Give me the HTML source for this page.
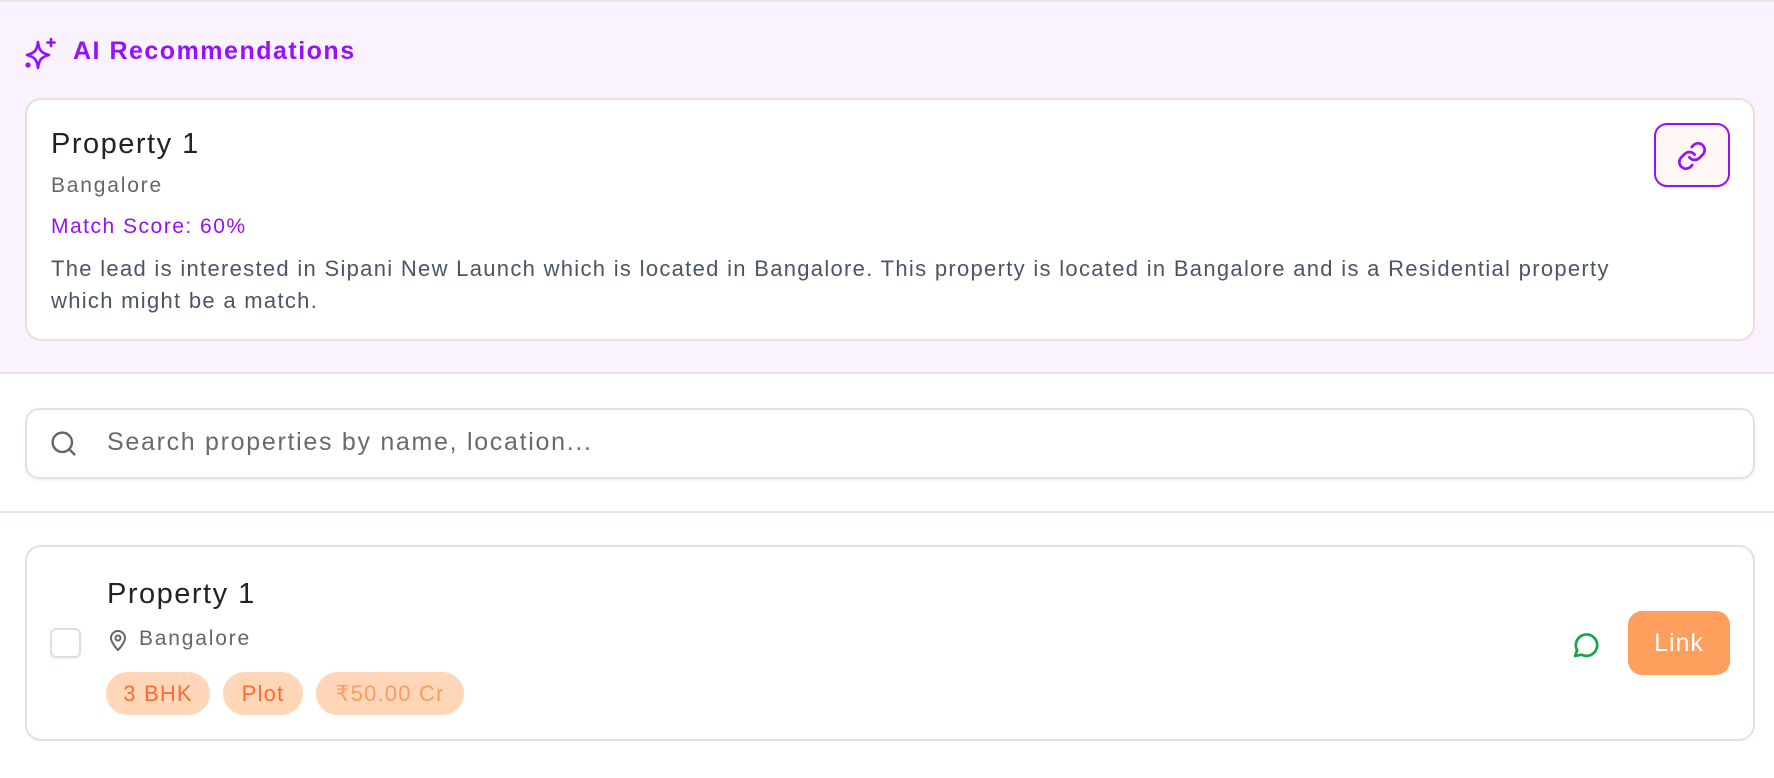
<!DOCTYPE html>
<html><head><meta charset="utf-8"><style>
*{box-sizing:border-box;margin:0;padding:0}
body{width:1774px;height:778px;background:#fff;font-family:"Liberation Sans",sans-serif;position:relative;overflow:hidden;letter-spacing:1.6px}
.band{position:absolute;left:0;top:0;width:1774px;height:374px;background:#faf3ff;border-top:2px solid #f1e6e3;border-bottom:2px solid #ece4e0}
.abs{position:absolute}
.card{position:absolute;background:#fff;border:2px solid #eadfd8;border-radius:16px}
.t{position:absolute;white-space:nowrap}
.tag{position:absolute;top:672px;height:43px;border-radius:22px;background:#ffd6b8;color:#ff6a2e;font-size:22px;line-height:43px;text-align:center;letter-spacing:1.2px}
</style></head><body>
<div class="band"></div>
<svg class="abs" style="left:24px;top:37px" width="32" height="32" viewBox="0 0 32 32" fill="none" stroke="#9810fa" stroke-width="2.6" stroke-linejoin="round" stroke-linecap="round">
<path d="M14 5 C15 13 17 16 25 18 C17 20 15 23 14 31 C13 23 11 20 3 18 C11 16 13 13 14 5Z"/>
<path d="M27 2v7M23.5 5.5h7"/><circle cx="4" cy="28" r="1.3" fill="#9810fa"/>
</svg>
<div class="t" style="left:73px;top:37px;font-size:25px;font-weight:bold;color:#9810fa;letter-spacing:1.5px">AI Recommendations</div>
<div class="card" style="left:25px;top:98px;width:1730px;height:243px"></div>
<div class="t" style="left:51px;top:128px;font-size:29px;color:#222;letter-spacing:1.5px">Property 1</div>
<div class="t" style="left:51px;top:174px;font-size:21px;color:#666;letter-spacing:1.8px">Bangalore</div>
<div class="t" style="left:51px;top:215px;font-size:21px;color:#9810fa;letter-spacing:1.5px">Match Score: 60%</div>
<div class="abs" style="left:51px;top:253px;width:1640px;font-size:22px;line-height:32px;color:#4a5565;letter-spacing:1.3px;white-space:nowrap">The lead is interested in Sipani New Launch which is located in Bangalore. This property is located in Bangalore and is a Residential property<br>which might be a match.</div>
<div class="abs" style="left:1654px;top:123px;width:76px;height:64px;border:2px solid #9810fa;border-radius:13px;background:#fff7f3"></div>
<svg class="abs" style="left:1676px;top:140px" width="32" height="32" viewBox="0 0 24 24" fill="none" stroke="#9810fa" stroke-width="2" stroke-linecap="round"><path d="M10 13a5 5 0 0 0 7.5.5l3-3a5 5 0 0 0-7-7l-1.7 1.7"/><path d="M14 11a5 5 0 0 0-7.5-.5l-3 3a5 5 0 0 0 7 7l1.7-1.7"/></svg>
<div class="card" style="left:25px;top:408px;width:1730px;height:71px;border-radius:14px;box-shadow:0 2px 3px rgba(0,0,0,0.05)"></div>
<svg class="abs" style="left:49px;top:429px" width="29" height="29" viewBox="0 0 24 24" fill="none" stroke="#666" stroke-width="2" stroke-linecap="round"><circle cx="11" cy="11" r="8"/><path d="M21 21l-4.3-4.3"/></svg>
<div class="t" style="left:107px;top:428px;font-size:25px;color:#6a6a6a;letter-spacing:1.7px">Search properties by name, location...</div>
<div class="abs" style="left:0;top:511px;width:1774px;height:2px;background:#ece4e0"></div>
<div class="card" style="left:25px;top:545px;width:1730px;height:196px"></div>
<div class="abs" style="left:50px;top:628px;width:31px;height:30px;border:2px solid #e8dcd6;border-radius:6px;box-shadow:0 1px 2px rgba(0,0,0,0.06)"></div>
<div class="t" style="left:107px;top:578px;font-size:29px;color:#222;letter-spacing:1.5px">Property 1</div>
<svg class="abs" style="left:108px;top:628px" width="20" height="24" viewBox="0 0 20 24" fill="none" stroke="#666" stroke-width="2"><path d="M10 22s7-7 7-12a7 7 0 0 0-14 0c0 5 7 12 7 12z"/><circle cx="10" cy="10" r="2.5"/></svg>
<div class="t" style="left:139px;top:627px;font-size:21px;color:#666;letter-spacing:1.8px">Bangalore</div>
<div class="tag" style="left:106px;width:104px">3 BHK</div>
<div class="tag" style="left:223px;width:80px">Plot</div>
<div class="tag" style="left:316px;width:148px;color:#ff9b60">₹50.00 Cr</div>
<svg class="abs" style="left:1571px;top:628px" width="32" height="32" viewBox="0 0 24 24" fill="none" stroke="#16a34a" stroke-width="2" stroke-linejoin="round"><path d="M3 21l1.6-4.3A8 8 0 1 1 8 20z"/></svg>
<div class="abs" style="left:1628px;top:611px;width:102px;height:64px;border-radius:14px;background:#ff9f5e;color:#fff;font-size:25px;line-height:64px;text-align:center;letter-spacing:1px">Link</div>
</body></html>
